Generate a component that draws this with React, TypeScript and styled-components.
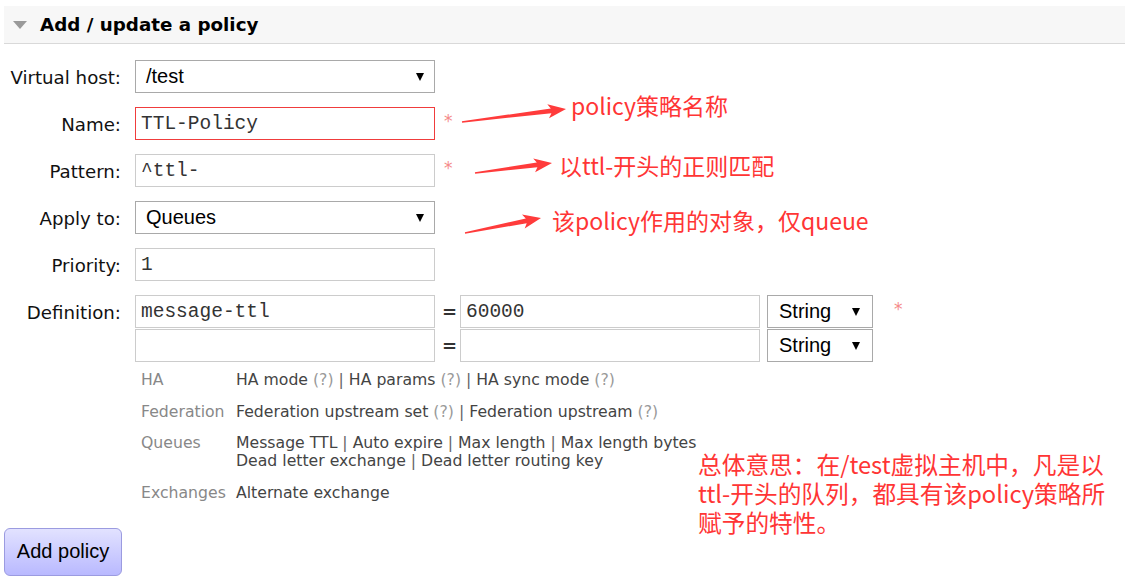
import React from "react";
import styled, { createGlobalStyle } from "styled-components";

const GlobalStyle = createGlobalStyle`
  html, body { margin: 0; padding: 0; background: #fff; }
  body { font-family: "DejaVu Sans", Verdana, sans-serif; color: #000; }
  * { box-sizing: border-box; }
`;

const Page = styled.div`
  position: relative;
  width: 1125px;
  height: 581px;
  overflow: hidden;
`;

const Header = styled.div`
  display: flex;
  align-items: center;
  margin: 6px 0 0 4px;
  height: 38px;
  padding-left: 9px;
  background: #f7f7f7;
  border-bottom: 1px solid #d9d9d9;
`;

const Caret = styled.span`
  width: 0;
  height: 0;
  border-left: 7.5px solid transparent;
  border-right: 7.5px solid transparent;
  border-top: 8px solid #9a9a9a;
  margin-right: 13px;
`;

const Title = styled.h2`
  margin: 0;
  font-size: 18.3px;
  font-weight: bold;
  color: #000;
`;

const Form = styled.div`
  display: grid;
  grid-template-columns: 121px auto;
  column-gap: 14px;
  row-gap: 14px;
  margin-top: 16px;
  justify-content: start;
`;

const Label = styled.label`
  font-size: 18.2px;
  height: 33px;
  line-height: 30px;
  padding-top: 3px;
  text-align: right;
  white-space: nowrap;
  color: #111;
`;

const Field = styled.div`
  display: flex;
  align-items: flex-start;
`;

const TextInput = styled.input<{ $invalid?: boolean; $w?: number }>`
  width: ${(p) => p.$w ?? 300}px;
  height: 33px;
  padding: 0 5px;
  border: 1px solid ${(p) => (p.$invalid ? "#f03c3c" : "#cccccc")};
  background: #fff;
  font-family: "Liberation Mono", "Courier New", monospace;
  font-size: 19.5px;
  color: #333;
  outline: none;
  border-radius: 0;
`;

const SelectBox = styled.div<{ $w: number; $pl: number; $pr: number }>`
  display: flex;
  align-items: center;
  justify-content: space-between;
  width: ${(p) => p.$w}px;
  height: 33px;
  padding: 0 ${(p) => p.$pr}px 0 ${(p) => p.$pl}px;
  border: 1px solid #a9a9a9;
  background: #fff;
  font-family: "Liberation Sans", Arial, sans-serif;
  font-size: 20px;
  color: #000;
`;

const DropArrow = styled.span`
  width: 0;
  height: 0;
  border-left: 4.5px solid transparent;
  border-right: 4.5px solid transparent;
  border-top: 8px solid #000;
`;

const Required = styled.span<{ $ml: number }>`
  margin-left: ${(p) => p.$ml}px;
  margin-top: 4px;
  font-family: "DejaVu Sans", sans-serif;
  font-size: 17px;
  line-height: 20px;
  color: #f58a8a;
`;

const DefStack = styled.div`
  display: flex;
  flex-direction: column;
  gap: 1px;
`;

const DefRow = styled.div`
  display: flex;
  align-items: center;
  gap: 7px;
`;

const Equals = styled.span`
  width: 11px;
  text-align: center;
  font-size: 18px;
  font-weight: bold;
  color: #333;
`;

const Help = styled.div`
  display: grid;
  grid-template-columns: 95px auto;
  row-gap: 13.5px;
  margin: 9px 0 0 141px;
  font-size: 15.7px;
  line-height: 18px;
`;

const HelpKey = styled.div`
  color: #888;
`;

const HelpVal = styled.div`
  color: #444;
`;

const Q = styled.span`
  color: #999;
`;

const Sep = styled.span`
  color: #666;
`;

const Button = styled.button`
  display: block;
  margin: 26px 0 0 4px;
  width: 118px;
  height: 48px;
  border: 1px solid #9b9be0;
  border-radius: 6px;
  background: linear-gradient(#e2e2ff, #b9b9ff);
  font-family: "Liberation Sans", Arial, sans-serif;
  font-size: 20px;
  color: #000;
  padding: 0;
`;

const Overlay = styled.div`
  position: absolute;
  inset: 0;
  pointer-events: none;
`;

const ArrowLayer = styled.svg`
  position: absolute;
  left: 0;
  top: 0;
`;

const Note = styled.div<{ $x: number; $y: number; $size?: number }>`
  position: absolute;
  left: ${(p) => p.$x}px;
  top: ${(p) => p.$y}px;
  font-family: "Noto Sans CJK SC", "Noto Sans", sans-serif;
  font-size: ${(p) => p.$size ?? 23}px;
  line-height: 29px;
  color: #ff3535;
  white-space: nowrap;
`;

function arrowPoints(tx: number, ty: number, px: number, py: number): string {
  const dx = px - tx;
  const dy = py - ty;
  const L = Math.hypot(dx, dy);
  const ux = dx / L;
  const uy = dy / L;
  const nx = -uy;
  const ny = ux;
  const headLen = 18;
  const headW = 7;
  const tailW = 0.7;
  const neckW = 2.4;
  const bx = px - ux * headLen;
  const by = py - uy * headLen;
  const nbx = px - ux * (headLen - 3);
  const nby = py - uy * (headLen - 3);
  const pts: [number, number][] = [
    [tx + nx * tailW, ty + ny * tailW],
    [nbx + nx * neckW, nby + ny * neckW],
    [bx + nx * headW, by + ny * headW],
    [px, py],
    [bx - nx * headW, by - ny * headW],
    [nbx - nx * neckW, nby - ny * neckW],
    [tx - nx * tailW, ty - ny * tailW],
  ];
  return pts.map(([x, y]) => `${x.toFixed(1)},${y.toFixed(1)}`).join(" ");
}

const arrows: [number, number, number, number][] = [
  [462, 122, 566, 109],
  [475, 173, 552, 163],
  [465, 233, 541, 218],
];

export default function App() {
  return (
    <>
      <GlobalStyle />
      <Page>
        <Header>
          <Caret />
          <Title>Add / update a policy</Title>
        </Header>

        <Form>
          <Label>Virtual host:</Label>
          <Field>
            <SelectBox $w={300} $pl={10} $pr={10}>
              <span>/test</span>
              <DropArrow />
            </SelectBox>
          </Field>

          <Label>Name:</Label>
          <Field>
            <TextInput $invalid readOnly defaultValue="TTL-Policy" />
            <Required $ml={9}>*</Required>
          </Field>

          <Label>Pattern:</Label>
          <Field>
            <TextInput readOnly defaultValue="^ttl-" />
            <Required $ml={9}>*</Required>
          </Field>

          <Label>Apply to:</Label>
          <Field>
            <SelectBox $w={300} $pl={10} $pr={10}>
              <span>Queues</span>
              <DropArrow />
            </SelectBox>
          </Field>

          <Label>Priority:</Label>
          <Field>
            <TextInput readOnly defaultValue="1" />
          </Field>

          <Label>Definition:</Label>
          <Field>
            <DefStack>
              <DefRow>
                <TextInput readOnly defaultValue="message-ttl" />
                <Equals>=</Equals>
                <TextInput readOnly defaultValue="60000" />
                <SelectBox $w={106} $pl={11} $pr={12}>
                  <span>String</span>
                  <DropArrow />
                </SelectBox>
              </DefRow>
              <DefRow>
                <TextInput readOnly defaultValue="" />
                <Equals>=</Equals>
                <TextInput readOnly defaultValue="" />
                <SelectBox $w={106} $pl={11} $pr={12}>
                  <span>String</span>
                  <DropArrow />
                </SelectBox>
              </DefRow>
            </DefStack>
            <Required $ml={21}>*</Required>
          </Field>
        </Form>

        <Help>
          <HelpKey>HA</HelpKey>
          <HelpVal>
            HA mode <Q>(?)</Q> <Sep>|</Sep> HA params <Q>(?)</Q> <Sep>|</Sep> HA sync mode <Q>(?)</Q>
          </HelpVal>
          <HelpKey>Federation</HelpKey>
          <HelpVal>
            Federation upstream set <Q>(?)</Q> <Sep>|</Sep> Federation upstream <Q>(?)</Q>
          </HelpVal>
          <HelpKey>Queues</HelpKey>
          <HelpVal>
            Message TTL <Sep>|</Sep> Auto expire <Sep>|</Sep> Max length <Sep>|</Sep> Max length bytes
            <br />
            Dead letter exchange <Sep>|</Sep> Dead letter routing key
          </HelpVal>
          <HelpKey>Exchanges</HelpKey>
          <HelpVal>Alternate exchange</HelpVal>
        </Help>

        <Button>Add policy</Button>

        <Overlay>
          <ArrowLayer width={1125} height={581} viewBox="0 0 1125 581">
            {arrows.map((a, i) => (
              <polygon key={i} points={arrowPoints(a[0], a[1], a[2], a[3])} fill="#ff3b3b" />
            ))}
          </ArrowLayer>
          <Note $x={571} $y={91}>policy策略名称</Note>
          <Note $x={559} $y={151}>以ttl-开头的正则匹配</Note>
          <Note $x={552} $y={206}>该policy作用的对象，仅queue</Note>
          <Note $x={698} $y={450} $size={23.7}>
            总体意思：在/test虚拟主机中，凡是以
            <br />
            ttl-开头的队列，都具有该policy策略所
            <br />
            赋予的特性。
          </Note>
        </Overlay>
      </Page>
    </>
  );
}
